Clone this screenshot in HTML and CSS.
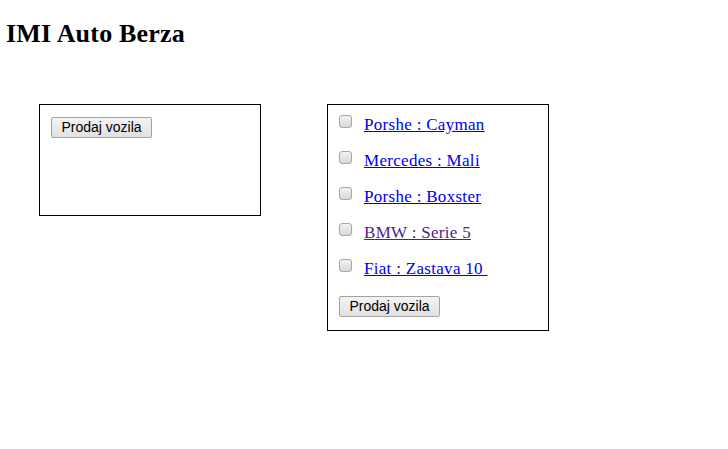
FILE: index.html
```html
<!DOCTYPE html>
<html>
<head>
<meta charset="utf-8">
<title>IMI Auto Berza</title>
<link rel="stylesheet" href="styles.css">
</head>
<body>
<h1 class="title">IMI Auto Berza</h1>
<div class="boxes">
  <div class="box box-sell">
    <button class="btn" type="button">Prodaj vozila</button>
  </div>
  <div class="box box-list">
    <div class="row"><input class="chk" type="checkbox"><a class="link" href="#">Porshe : Cayman</a></div>
    <div class="row"><input class="chk" type="checkbox"><a class="link" href="#">Mercedes : Mali</a></div>
    <div class="row"><input class="chk" type="checkbox"><a class="link" href="#">Porshe : Boxster</a></div>
    <div class="row"><input class="chk" type="checkbox"><a class="link visited" href="#">BMW : Serie 5</a></div>
    <div class="row"><input class="chk" type="checkbox"><a class="link" href="#">Fiat : Zastava 10&nbsp;</a></div>
    <div class="row-btn"><button class="btn" type="button">Prodaj vozila</button></div>
  </div>
</div>
</body>
</html>
```

FILE: styles.css
```css
html, body {
  margin: 0;
  padding: 0;
  background: #ffffff;
}
body {
  font-family: "Liberation Serif", "Times New Roman", serif;
  color: #000000;
  padding: 0 0 0 6px;
}
.title {
  margin: 0;
  padding-top: 19px;
  font-size: 26px;
  line-height: 30px;
  font-weight: bold;
  letter-spacing: 0.2px;
}
.boxes {
  display: flex;
  align-items: flex-start;
  gap: 66px;
  margin-top: 55px;
  margin-left: 33px;
}
.box {
  border: 1px solid #000000;
  width: 220px;
  box-sizing: content-box;
}
.box-sell {
  height: 110px;
  padding: 0;
}
.box-sell .btn {
  margin: 12px 0 0 11px;
}
.box-list {
  height: 225px;
  padding: 0;
}
.row {
  display: flex;
  align-items: center;
  height: 36px;
}
.row:first-child {
  margin-top: 2px;
}
.chk {
  appearance: none;
  -webkit-appearance: none;
  width: 13px;
  height: 13px;
  margin: 0 12px 0 11px;
  box-sizing: border-box;
  border: 1px solid #a6a6a6;
  border-radius: 3px;
  background: linear-gradient(#f2f2f2, #d8d8d8);
  position: relative;
  top: -4px;
}
.link {
  font-size: 17px;
  letter-spacing: 0.3px;
  color: #0000ee;
  text-decoration: underline;
  font-family: "Liberation Serif", "Times New Roman", serif;
}
.link.visited {
  color: #551a8b;
}
.row-btn {
  padding: 9px 0 0 11px;
}
.btn {
  display: block;
  font-family: "Liberation Sans", Arial, sans-serif;
  font-size: 14px;
  color: #000000;
  height: 21px;
  padding: 0 8px;
  line-height: 19px;
  border: 1px solid #a3a3a3;
  border-radius: 2px;
  background: linear-gradient(#f3f3f3, #e1e1e1);
  box-sizing: border-box;
  width: 101px;
}
```
